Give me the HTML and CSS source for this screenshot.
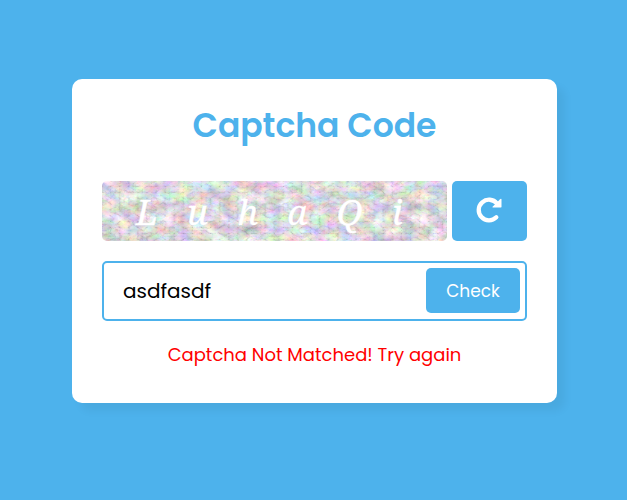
FILE: index.html
```html
<!DOCTYPE html>
<html lang="en">
<head>
<meta charset="utf-8">
<title>Captcha Code</title>
<link rel="stylesheet" href="styles.css">
</head>
<body>
<main class="card">
  <h1>Captcha Code</h1>
  <div class="captcha-row">
    <div class="captcha">
      <svg class="noise" width="345" height="60" aria-hidden="true">
        <filter id="grain" x="0" y="0" width="100%" height="100%" color-interpolation-filters="sRGB">
          <feTurbulence type="turbulence" baseFrequency="0.11 0.17" numOctaves="3" seed="8"/>
          <feColorMatrix values="0.38 0.1 0.1 0 0.82  0.1 0.38 0.1 0 0.82  0.1 0.1 0.38 0 0.82  0 0 0 0 1" result="base"/>
          <feTurbulence type="fractalNoise" baseFrequency="0.067 0.093" numOctaves="5" seed="35"/>
          <feColorMatrix values="0.46 0.04 0.04 0 0.61  0.04 0.46 0.04 0 0.6  0.04 0.04 0.46 0 0.61  0 0 0 0 1" result="tint"/>
          <feBlend in="base" in2="tint" mode="multiply"/>
        </filter>
        <rect width="345" height="60" filter="url(#grain)"/>
      </svg>
      <span class="captcha-text">LuhaQi</span>
    </div>
    <button class="reload" aria-label="Reload">
      <svg width="27" height="27" viewBox="0 0 27 27">
        <path d="M21 7.5A10.3 10.3 0 1 0 20.3 21.3" fill="none" stroke="#fff" stroke-width="4.3" stroke-linecap="round"/>
        <path d="M23.8 3.4Q25.5 2 25.5 3.8V10.4Q25.5 11.6 24.3 11.6H17.3Q15.8 11.6 16.8 10.4Z" fill="#fff"/>
      </svg>
    </button>
  </div>
  <form class="entry">
    <input type="text" value="asdfasdf" aria-label="Captcha" spellcheck="false">
    <button type="button" class="check">Check</button>
  </form>
  <p class="status">Captcha Not Matched! Try again</p>
</main>
</body>
</html>
```
FILE: styles.css
```css
* { box-sizing: border-box; margin: 0; padding: 0; }
body {
  min-height: 500px;
  padding: 79px 70px 0 72px;
  background: #4db2ec;
  font-family: Poppins, Inter, sans-serif;
}
.card {
  width: 485px;
  height: 324px;
  padding: 22px 30px 0;
  border-radius: 10px;
  background: #fff;
  box-shadow: 8px 8px 8px rgba(0, 0, 0, 0.05);
}
h1 {
  height: 50px;
  margin-bottom: 30px;
  color: #4db2ec;
  font-size: 33px;
  font-weight: 600;
  line-height: 50px;
  text-align: center;
  white-space: nowrap;
}
.captcha-row { display: flex; gap: 5px; height: 60px; }
.captcha {
  display: grid;
  width: 345px;
  border-radius: 5px;
  overflow: hidden;
}
.noise, .captcha-text { grid-area: 1 / 1; }
.captcha-text {
  z-index: 1;
  width: 345px;
  padding-left: 34px;
  color: #fff;
  font: italic 35px/61px "Noto Serif", "Liberation Serif", serif;
  letter-spacing: 29.2px;
  -webkit-text-stroke: 0.3px #fff;
  white-space: nowrap;
}
button {
  border: 0;
  border-radius: 5px;
  background: #4db2ec;
  color: #fff;
  font-family: Poppins, Inter, sans-serif;
}
.reload {
  display: flex;
  width: 75px;
  height: 60px;
  padding: 15px 0 0 24px;
}
.entry {
  display: flex;
  align-items: center;
  height: 60px;
  margin-top: 20px;
  padding-right: 5px;
  border: 2px solid #4db2ec;
  border-radius: 5px;
}
input {
  flex: 1;
  min-width: 0;
  height: 56px;
  padding-left: 19px;
  border: 0;
  outline: 0;
  background: transparent;
  color: #000;
  font: 20px Poppins, Inter, sans-serif;
}
.check { width: 94px; height: 45px; margin-top: -1px; font-size: 17px; }
.status {
  height: 30px;
  margin-top: 19px;
  color: #f00;
  font-size: 18px;
  line-height: 30px;
  text-align: center;
  white-space: nowrap;
}
```
